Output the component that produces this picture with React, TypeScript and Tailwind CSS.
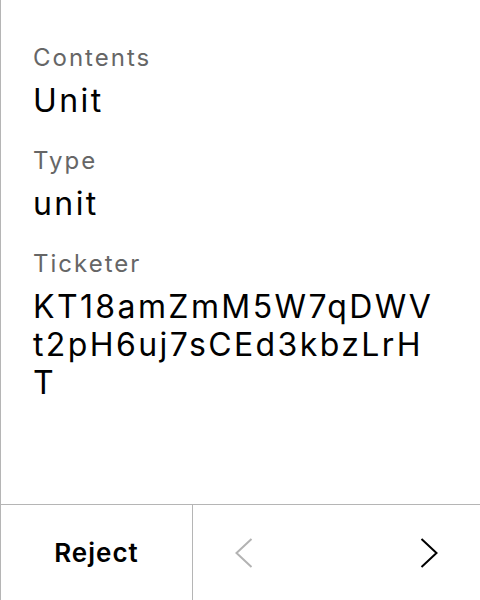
const fields = [
  { label: "Contents", value: "Unit" },
  { label: "Type", value: "unit" },
  { label: "Ticketer", value: "KT18amZmM5W7qDWVt2pH6uj7sCEd3kbzLrHT" },
];

function Chevron({ dir, className }: { dir: "left" | "right"; className: string }) {
  return (
    <svg width="18" height="30" viewBox="0 0 18 30" fill="none" className={className}>
      <path
        d={dir === "left" ? "M16.5 1 L1.5 15 L16.5 29" : "M1.5 1 L16.5 15 L1.5 29"}
        stroke="currentColor"
        strokeWidth="2"
      />
    </svg>
  );
}

export default function App() {
  return (
    <div
      className="flex h-[600px] w-[480px] flex-col border-l border-[#b5b5b5] bg-white text-black"
      style={{ fontFamily: "Inter, 'Noto Sans', sans-serif" }}
    >
      {/* Details */}
      <div className="flex flex-1 flex-col gap-[26px] pl-[32px] pr-[45px] pt-[43px]">
        {fields.map((f) => (
          <div key={f.label} className="flex flex-col gap-[10px]">
            <div className="text-[24px] leading-[29px] tracking-[2px] text-[#666666]">{f.label}</div>
            <div className="break-all text-[32px] leading-[38px] tracking-[2.4px]">{f.value}</div>
          </div>
        ))}
      </div>

      {/* Actions */}
      <div className="grid h-[96px] grid-cols-[192px_1fr] border-t border-[#b5b5b5]">
        <button className="flex items-center justify-center border-r border-[#b5b5b5] text-[26px] font-semibold tracking-[1px]">
          Reject
        </button>
        <div className="flex items-center justify-between pl-[42px] pr-[42px]">
          <Chevron dir="left" className="text-[#b3b3b3]" />
          <Chevron dir="right" className="text-black" />
        </div>
      </div>
    </div>
  );
}
